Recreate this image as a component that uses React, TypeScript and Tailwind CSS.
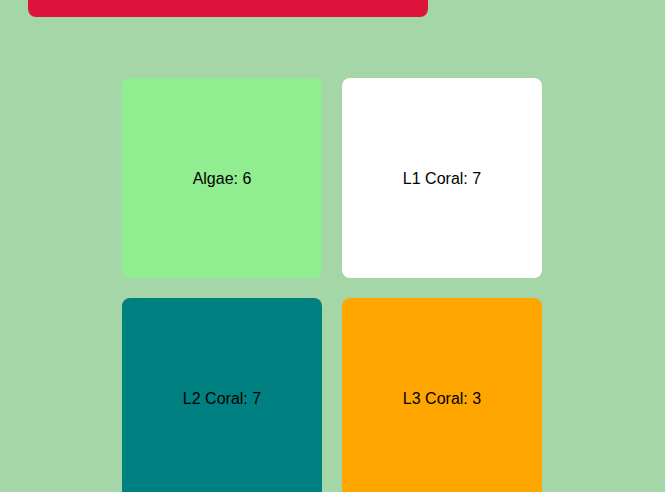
export default function App() {
  const cards = [
    { label: "Algae: 6", cls: "bg-[#90ee90]" },
    { label: "L1 Coral: 7", cls: "bg-white" },
    { label: "L2 Coral: 7", cls: "bg-[#008080]" },
    { label: "L3 Coral: 3", cls: "bg-[#ffa500]" },
  ];
  return (
    <div className="w-[665px] h-[492px] overflow-hidden bg-[#a5d6a7] font-['Liberation_Sans',Arial,sans-serif] text-black">
      <div className="ml-[28px] w-[400px] h-[17px] bg-[#dc143c] rounded-b-[8px]" />
      <div className="mt-[61px] ml-[122px] grid grid-cols-[200px_200px] gap-[20px]">
        {cards.map((c) => (
          <div
            key={c.label}
            className={`${c.cls} w-[200px] h-[200px] rounded-[8px] flex items-center justify-center pt-[2px] text-[16px]`}
          >
            {c.label}
          </div>
        ))}
      </div>
    </div>
  );
}
